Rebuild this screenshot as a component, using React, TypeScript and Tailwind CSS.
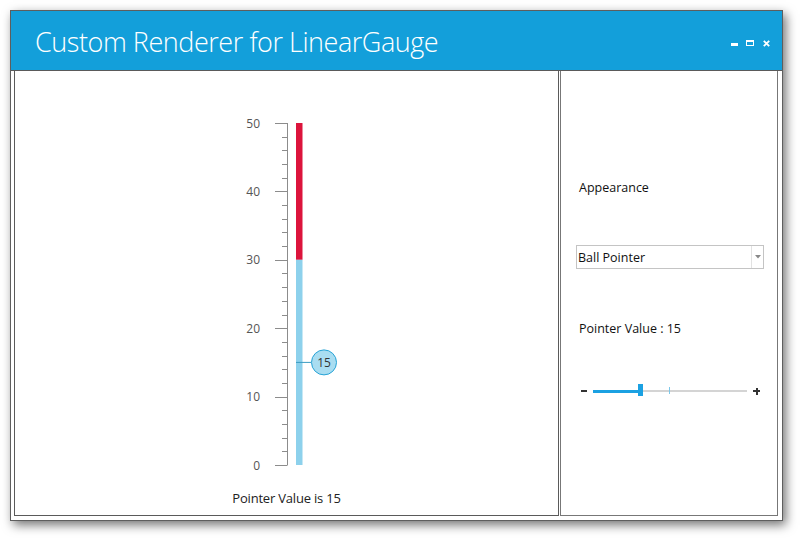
import React from 'react'

const font = { fontFamily: '"Open Sans", "Noto Sans", sans-serif' }

function Gauge() {
  const y = (v: number) => 394 - v * 6.84
  const minors = Array.from({ length: 26 }, (_, i) => i * 2)
  const majors = [0, 10, 20, 30, 40, 50]
  const py = y(15)

  return (
    <svg width="543" height="415" className="block">
      <line x1="272.5" y1={y(50)} x2="272.5" y2={y(0) + 0.5} stroke="#8c8c8c" strokeWidth="1" />
      {minors.map((v) => (
        <line key={v} x1={v % 10 === 0 ? 260 : 267} y1={Math.round(y(v)) + 0.5} x2="272" y2={Math.round(y(v)) + 0.5} stroke="#8c8c8c" strokeWidth="1" />
      ))}
      {majors.map((v) => (
        <text key={v} x="245" y={y(v) + 4.5} textAnchor="end" fontSize="12" fill="#555" style={font}>
          {v}
        </text>
      ))}
      <rect x="281" y={y(50)} width="6.5" height={y(30) - y(50)} fill="#dc143c" />
      <rect x="281" y={y(30)} width="6.5" height={y(0) - y(30)} fill="#8dd1ec" />
      <line x1="281" y1={py} x2="296" y2={py} stroke="#3a9cc2" strokeWidth="1" />
      <circle cx="309" cy={py} r="12.5" fill="#a9ddf1" stroke="#27a3d6" strokeWidth="1" />
      <text x="309" y={py + 4.5} textAnchor="middle" fontSize="12" fill="#333" style={font}>
        15
      </text>
    </svg>
  )
}

function WindowButtons() {
  return (
    <div className="flex items-start pt-[29px] pr-[12px] ml-auto">
      <svg width="7" height="7" className="block">
        <rect x="0" y="3" width="7" height="3" fill="#fff" />
      </svg>
      <svg width="8" height="7" className="block ml-[8px]">
        <rect x="0.5" y="0.5" width="7" height="5" fill="none" stroke="#fff" strokeWidth="1" />
        <rect x="0" y="0" width="8" height="2" fill="#fff" />
      </svg>
      <svg width="7" height="7" className="block ml-[9px]">
        <path d="M0.8 0.8 L6.2 6.2 M6.2 0.8 L0.8 6.2" stroke="#fff" strokeWidth="1.8" />
      </svg>
    </div>
  )
}

function Slider() {
  return (
    <div className="flex items-center h-[12px] mt-[48px] pl-[20px]">
      <div className="w-[6px] h-[2px] bg-[#333]" />
      <div className="relative ml-[6px] w-[154px] h-[2px] bg-[#d4d4d4]">
        <div className="absolute left-0 top-[-0.5px] w-[46px] h-[3px] bg-[#1ba1e2]" />
        <div className="absolute left-[76px] top-[-3px] w-[1px] h-[7px] bg-[#7cc8ea]" />
        <div className="absolute left-[45px] top-[-6px] w-[5px] h-[12px] bg-[#1ba1e2]" />
      </div>
      <div className="relative ml-[6px] w-[7px] h-[7px]">
        <div className="absolute left-0 top-[2.5px] w-[7px] h-[2px] bg-[#333]" />
        <div className="absolute left-[2.5px] top-0 w-[2px] h-[7px] bg-[#333]" />
      </div>
    </div>
  )
}

export default function App() {
  return (
    <div className="w-[800px] h-[538px] bg-white pl-[10px] pt-[10px]" style={font}>
      <div className="w-[773px] h-[511px] border border-[#5e5e5e] bg-white flex flex-col shadow-[3px_4px_10px_rgba(0,0,0,0.55)]">
        {/* Title bar */}
        <div className="h-[60px] shrink-0 bg-[#139fda] border-b border-[#5a5a5a] flex items-start">
          <div className="pl-[24px] pt-[12px] text-[27px] leading-[37px] font-light text-white tracking-[-0.45px]">
            Custom Renderer for LinearGauge
          </div>
          <WindowButtons />
        </div>

        {/* Body */}
        <div className="flex-1 flex pl-[3px] pr-[3px] pb-[4px]">
          <div className="w-[545px] border-l border-r border-b border-[#5a5a5a] flex flex-col">
            <Gauge />
            <div className="text-center text-[13px] leading-[18px] text-[#222] mt-[3px] tracking-[-0.2px]">
              Pointer Value is 15
            </div>
          </div>
          <div className="w-[218px] ml-[1px] border-l border-r border-b border-[#777] flex flex-col">
            <div className="pt-[108px] pl-[18px] text-[12.5px] leading-[17px] text-[#111]">Appearance</div>
            <div className="mt-[49px] ml-[15px] w-[188px] h-[24px] border border-[#c4c4c4] flex items-center">
              <div className="flex-1 pl-[1px] text-[12.5px] text-[#111] leading-[17px]">Ball Pointer</div>
              <div className="w-[12px] h-full border-l border-[#e2e2e2] flex items-center justify-center">
                <svg width="6" height="4" className="block">
                  <path d="M0 0 L6 0 L3 3.5 Z" fill="#888" />
                </svg>
              </div>
            </div>
            <div className="mt-[51px] pl-[18px] text-[12.5px] leading-[17px] text-[#111]">Pointer Value : 15</div>
            <Slider />
          </div>
        </div>
      </div>
    </div>
  )
}
